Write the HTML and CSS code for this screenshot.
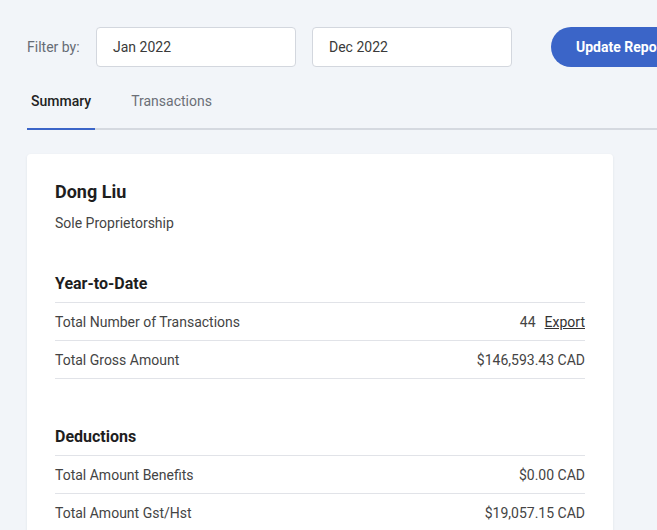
FILE: index.html
```html
<!DOCTYPE html>
<html lang="en">
<head>
<meta charset="utf-8">
<title>Report Summary</title>
<link rel="stylesheet" href="styles.css">
</head>
<body>
<div class="page">
  <div class="filter-row">
    <span class="filter-label">Filter by:</span>
    <div class="date-input">Jan 2022</div>
    <div class="date-input">Dec 2022</div>
    <button class="update-btn" type="button">Update Report</button>
  </div>
  <nav class="tabs">
    <a class="tab active">Summary</a>
    <a class="tab">Transactions</a>
  </nav>
  <section class="card">
    <h1 class="name">Dong Liu</h1>
    <p class="entity">Sole Proprietorship</p>

    <div class="section">
      <h2 class="section-title">Year-to-Date</h2>
      <div class="row">
        <span class="label">Total Number of Transactions</span>
        <span class="value">44<a class="export">Export</a></span>
      </div>
      <div class="row">
        <span class="label">Total Gross Amount</span>
        <span class="value">$146,593.43 CAD</span>
      </div>
    </div>

    <div class="section section-gap">
      <h2 class="section-title">Deductions</h2>
      <div class="row">
        <span class="label">Total Amount Benefits</span>
        <span class="value">$0.00 CAD</span>
      </div>
      <div class="row">
        <span class="label">Total Amount Gst/Hst</span>
        <span class="value">$19,057.15 CAD</span>
      </div>
    </div>
  </section>
</div>
</body>
</html>
```

FILE: styles.css
```css
html, body {
  margin: 0;
  padding: 0;
  overflow: hidden;
  background: #f2f5f9;
}

body {
  font-family: Roboto, "Liberation Sans", sans-serif;
  color: #333;
  height: 530px;
}

.page {
  padding: 27px 0 0 27px;
  width: 760px;
}

.filter-row {
  display: flex;
  align-items: center;
  height: 40px;
}

.filter-label {
  font-size: 14px;
  color: #666c75;
  width: 69px;
}

.date-input {
  box-sizing: border-box;
  width: 200px;
  height: 40px;
  margin-right: 16px;
  padding: 0 16px;
  display: flex;
  align-items: center;
  background: #fff;
  border: 1px solid #d3d7de;
  border-radius: 4px;
  font-size: 14px;
  color: #3a3a3a;
}

.date-input + .date-input {
  margin-right: 39px;
}

.update-btn {
  flex: none;
  height: 40px;
  padding: 0 25px;
  border: none;
  border-radius: 20px;
  background: #3b65c8;
  color: #fff;
  font-family: Roboto, "Liberation Sans", sans-serif;
  font-size: 14px;
  font-weight: 700;
  white-space: nowrap;
}

.tabs {
  display: flex;
  gap: 32px;
  margin-top: 24px;
  border-bottom: 2px solid #d5d9e0;
}

.tab {
  padding: 0 4px 17px;
  font-size: 14px;
  line-height: 20px;
  color: #6b6f77;
  margin-bottom: -2px;
  border-bottom: 2px solid transparent;
}

.tab.active {
  color: #222;
  font-weight: 500;
  border-bottom-color: #3b65c8;
}

.card {
  box-sizing: border-box;
  width: 586px;
  margin-top: 24px;
  padding: 26px 28px 40px;
  background: #fff;
  border-radius: 4px;
  box-shadow: 0 1px 3px rgba(30, 40, 70, 0.08);
}

.name {
  margin: 0;
  font-size: 18px;
  line-height: 24px;
  font-weight: 700;
  color: #1e1e1e;
}

.entity {
  margin: 10px 0 0;
  font-size: 14px;
  line-height: 18px;
  color: #444;
}

.section {
  margin-top: 42px;
}

.section-gap {
  margin-top: 48px;
}

.section-title {
  margin: 0;
  padding-bottom: 8px;
  font-size: 16px;
  line-height: 20px;
  font-weight: 700;
  color: #1e1e1e;
  border-bottom: 1px solid #e1e3e8;
}

.row {
  display: flex;
  justify-content: space-between;
  align-items: center;
  height: 37px;
  border-bottom: 1px solid #e1e3e8;
  font-size: 14px;
  color: #444;
}

.export {
  margin-left: 9px;
  color: #333;
  text-decoration: underline;
}
```
